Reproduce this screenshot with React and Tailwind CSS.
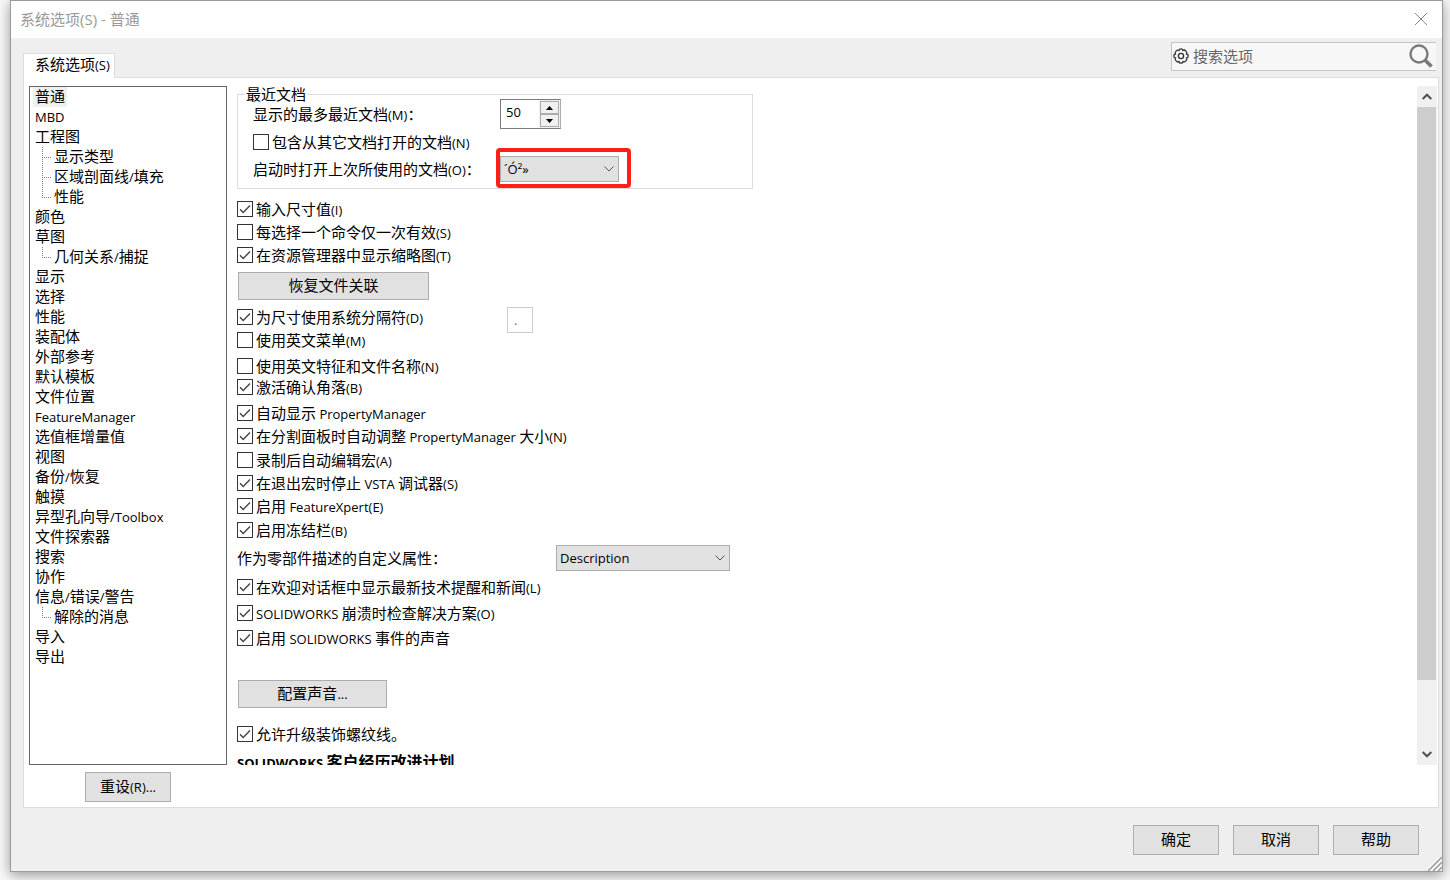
import React, { useState } from 'react';

const treeItems = [
  { label: '普通', selected: true },
  { label: 'MBD' },
  { label: '工程图' },
  { label: '显示类型', child: true },
  { label: '区域剖面线/填充', child: true },
  { label: '性能', child: true, last: true },
  { label: '颜色' },
  { label: '草图' },
  { label: '几何关系/捕捉', child: true, last: true },
  { label: '显示' },
  { label: '选择' },
  { label: '性能' },
  { label: '装配体' },
  { label: '外部参考' },
  { label: '默认模板' },
  { label: '文件位置' },
  { label: 'FeatureManager' },
  { label: '选值框增量值' },
  { label: '视图' },
  { label: '备份/恢复' },
  { label: '触摸' },
  { label: '异型孔向导/Toolbox' },
  { label: '文件探索器' },
  { label: '搜索' },
  { label: '协作' },
  { label: '信息/错误/警告' },
  { label: '解除的消息', child: true, last: true },
  { label: '导入' },
  { label: '导出' },
];

// Latin runs are set one step smaller than the Chinese around them
const Mixed = ({ children }) =>
  children.split(/([\x20-\x7e]+)/).map((part, i) =>
    i % 2 ? (
      <span key={i} className="text-[13px]">
        {part}
      </span>
    ) : (
      part
    )
  );

const Check = ({ label, checked = false, className = '' }) => {
  const [on, setOn] = useState(checked);
  return (
    <label className={`flex h-5 w-fit items-center gap-[3px] whitespace-nowrap ${className}`}>
      <span className="relative h-4 w-4 shrink-0">
        <input
          type="checkbox"
          checked={on}
          onChange={(e) => setOn(e.target.checked)}
          className="block h-4 w-4 appearance-none border border-[#333] bg-white"
        />
        {on && (
          <svg viewBox="0 0 16 16" className="pointer-events-none absolute inset-0 h-4 w-4" fill="none" stroke="#444" strokeWidth="1.4">
            <path d="M3 8.2 6.2 11.4 13 4.6" />
          </svg>
        )}
      </span>
      <span>
        <Mixed>{label}</Mixed>
      </span>
    </label>
  );
};

const Button = ({ children, className = '' }) => (
  <button type="button" className={`block border border-[#adadad] bg-[#e1e1e1] pb-0.5 text-center whitespace-nowrap ${className}`}>
    <Mixed>{children}</Mixed>
  </button>
);

const Select = ({ id, value, className = '' }) => (
  <span className={`relative block h-[26px] ${className}`}>
    <select id={id} defaultValue={value} className="h-full w-full appearance-none border border-[#adadad] bg-[#e1e1e1] pl-[3px] text-[13px]">
      <option>{value}</option>
    </select>
    <svg viewBox="0 0 10 6" className="pointer-events-none absolute top-[10px] right-[5px] h-1.5 w-2.5" fill="none" stroke="#555">
      <path d="M.5.5 5 5 9.5.5" />
    </svg>
  </span>
);

const TitleBar = () => (
  <header className="flex h-[37px] shrink-0 items-center justify-between bg-white pr-[15px] pb-0.5 pl-[9px]">
    <h1 className="text-[15px] text-[#999]">系统选项(S) - 普通</h1>
    <button type="button" aria-label="关闭">
      <svg viewBox="0 0 12 12" className="h-3 w-3" fill="none" stroke="#888">
        <path d="M0 0 12 12M12 0 0 12" />
      </svg>
    </button>
  </header>
);

const SearchBox = () => (
  <div className="mt-1 mr-1.5 flex h-[29px] w-[265px] items-center border border-r-0 border-[#c4c4c4] bg-[#f7f7f7] pb-0.5 pl-px">
    <svg viewBox="0 0 16 16" className="h-4 w-4 shrink-0" fill="none" stroke="#333" strokeWidth="1.3">
      <path d="M6 2.4Q6.2.8 8 .8T10 2.4Q11.4 1.4 12.9 3.1T13.6 6Q15.2 6.2 15.2 8T13.6 10Q14.4 11.4 12.9 12.9T10 13.6Q9.8 15.2 8 15.2T6 13.6Q4.6 14.6 3.1 12.9T2.4 10Q.8 9.8.8 8T2.4 6Q1.6 4.6 3.1 3.1T6 2.4Z" />
      <circle cx="8" cy="8" r="2.6" />
    </svg>
    <input
      type="text"
      aria-label="搜索选项"
      placeholder="搜索选项"
      className="min-w-0 flex-1 bg-transparent pl-1 text-[15px] outline-none placeholder:text-[#666]"
    />
    <button type="button" aria-label="搜索" className="mr-[3px]">
      <svg viewBox="0 0 24 24" className="h-6 w-6" fill="none" stroke="#7a7a7a">
        <circle cx="10" cy="10" r="8.5" strokeWidth="2.4" />
        <path d="m16 16 6.5 6.5" strokeWidth="3.8" />
      </svg>
    </button>
  </div>
);

const Tree = () => (
  <ul className="min-h-0 flex-1 overflow-hidden border border-[#646464] pl-[3px]">
    {treeItems.map((item, i) => (
      <li key={i} className="flex h-5">
        {item.child && (
          <svg viewBox="0 0 19 20" className="h-5 w-[19px] shrink-0" stroke="#808080" strokeDasharray="1 1" shapeRendering="crispEdges">
            <path d={item.last ? 'M9.5 0V11' : 'M9.5 0V20'} />
            <path d="M9 10.5H18" />
          </svg>
        )}
        <button type="button" className={`h-5 px-0.5 pb-0.5 leading-[18px] whitespace-nowrap ${item.selected ? 'bg-[#efefef]' : ''}`}>
          <Mixed>{item.label}</Mixed>
        </button>
      </li>
    ))}
  </ul>
);

const Spinner = () => (
  <span className="flex h-[30px] w-[61px] border border-[#7a7a7a] border-r-[#adadad] bg-white">
    <input id="recent" type="text" defaultValue="50" className="w-[38px] min-w-0 pb-1 pl-[5px] text-[13px] outline-none" />
    <span className="flex flex-1 flex-col bg-[#f0f0f0] p-px">
      <button type="button" aria-label="增加" className="flex flex-1 items-center justify-center border border-[#adadad]">
        <svg viewBox="0 0 7 4" className="h-1 w-[7px]">
          <path d="M0 4 3.5 0 7 4Z" />
        </svg>
      </button>
      <button type="button" aria-label="减少" className="flex flex-1 items-center justify-center border border-[#adadad]">
        <svg viewBox="0 0 7 4" className="h-1 w-[7px]">
          <path d="M0 0 3.5 4 7 0Z" />
        </svg>
      </button>
    </span>
  </span>
);

const RecentDocs = () => (
  <fieldset className="w-full max-w-[516px] border border-[#dcdcdc] pb-1.5 pl-[15px]">
    <legend className="-ml-2 px-px leading-4">最近文档</legend>
    <div className="-mt-[3px] flex items-center">
      <label htmlFor="recent" className="w-[247px]">
        <Mixed>显示的最多最近文档(M)：</Mixed>
      </label>
      <Spinner />
    </div>
    <Check label="包含从其它文档打开的文档(N)" className="mt-[3px]" />
    <div className="mt-1 flex items-center">
      <label htmlFor="startup" className="w-[247px]">
        <Mixed>启动时打开上次所使用的文档(O)：</Mixed>
      </label>
      <span className="relative">
        <Select id="startup" value="´Ó²»" className="w-[119px]" />
        <span className="pointer-events-none absolute -top-2 -right-3 -bottom-1.5 -left-1 rounded-[4px] border-4 border-[#ff1f14]" />
      </span>
    </div>
  </fieldset>
);

const GeneralOptions = () => (
  <form className="min-h-0 min-w-0 flex-1 overflow-hidden pl-2.5">
    <RecentDocs />
    <Check checked label="输入尺寸值(I)" className="mt-2.5" />
    <Check label="每选择一个命令仅一次有效(S)" className="mt-[3px]" />
    <Check checked label="在资源管理器中显示缩略图(T)" className="mt-[3px]" />
    <Button className="mt-[7px] ml-px h-7 w-[191px]">恢复文件关联</Button>
    <div className="mt-[7px] flex h-5 items-start">
      <Check checked label="为尺寸使用系统分隔符(D)" className="min-w-[270px]" />
      <input type="text" aria-label="分隔符" defaultValue="." disabled className="h-[26px] w-[26px] border border-[#ccc] pl-1.5 text-[13px] text-[#6d6d6d]" />
    </div>
    <Check label="使用英文菜单(M)" className="mt-[3px]" />
    <Check label="使用英文特征和文件名称(N)" className="mt-1.5" />
    <Check checked label="激活确认角落(B)" className="mt-px" />
    <Check checked label="自动显示 PropertyManager" className="mt-1.5" />
    <Check checked label="在分割面板时自动调整 PropertyManager 大小(N)" className="mt-[3px]" />
    <Check label="录制后自动编辑宏(A)" className="mt-1" />
    <Check checked label="在退出宏时停止 VSTA 调试器(S)" className="mt-[3px]" />
    <Check checked label="启用 FeatureXpert(E)" className="mt-[3px]" />
    <Check checked label="启用冻结栏(B)" className="mt-1" />
    <div className="mt-[5px] flex items-center">
      <label htmlFor="property" className="w-[319px]">
        作为零部件描述的自定义属性：
      </label>
      <Select id="property" value="Description" className="w-[174px]" />
    </div>
    <Check checked label="在欢迎对话框中显示最新技术提醒和新闻(L)" className="mt-1.5" />
    <Check checked label="SOLIDWORKS 崩溃时检查解决方案(O)" className="mt-1.5" />
    <Check checked label="启用 SOLIDWORKS 事件的声音" className="mt-[5px]" />
    <Button className="mt-8 ml-px h-7 w-[149px]">配置声音...</Button>
    <Check checked label="允许升级装饰螺纹线。" className="mt-4" />
    <h2 className="mt-2 text-base leading-5 font-bold">
      <Mixed>SOLIDWORKS 客户经历改进计划</Mixed>
    </h2>
  </form>
);

const ScrollBar = () => (
  <div className="mr-px flex w-5 flex-col bg-[#f0f0f0] pr-px">
    <button type="button" aria-label="向上滚动" className="flex h-[21px] items-center justify-center">
      <svg viewBox="0 0 10 7" className="h-[7px] w-2.5" fill="none" stroke="#505050" strokeWidth="2">
        <path d="M.7 6 5 1.7 9.3 6" />
      </svg>
    </button>
    <div className="min-h-0 flex-1">
      <div className="h-[90%] bg-[#cdcdcd]" />
    </div>
    <button type="button" aria-label="向下滚动" className="flex h-[21px] items-center justify-center">
      <svg viewBox="0 0 10 7" className="h-[7px] w-2.5" fill="none" stroke="#505050" strokeWidth="2">
        <path d="M.7 1 5 5.3 9.3 1" />
      </svg>
    </button>
  </div>
);

export default function App() {
  return (
    <div className="h-screen overflow-hidden bg-[#f8f8f8] pr-[7px] pb-2 pl-2.5 font-['Open_Sans','Noto_Sans_CJK_SC',sans-serif] text-[15px] leading-5 text-black">
      <div className="relative flex h-full flex-col border border-[#9b9b9b] bg-[#efefef] shadow-[0_3px_12px_rgba(0,0,0,0.4)]">
        <TitleBar />
        <div className="flex h-[39px] shrink-0 items-start justify-between">
          <div role="tablist" className="relative z-10 mt-[15px] ml-3">
            <button type="button" role="tab" aria-selected="true" className="h-[25px] border border-b-0 border-[#dcdcdc] bg-white pr-1 pb-1 pl-[11px] whitespace-nowrap">
              <Mixed>系统选项(S)</Mixed>
            </button>
          </div>
          <SearchBox />
        </div>
        <main className="mr-[3px] ml-3 flex min-h-0 flex-1 flex-col border border-[#dcdcdc] bg-white">
          <div className="mt-2 ml-[5px] flex min-h-0 flex-1">
            <nav className="flex w-[198px] shrink-0 flex-col">
              <Tree />
            </nav>
            <GeneralOptions />
            <ScrollBar />
          </div>
          <Button className="mt-[7px] mb-[5px] ml-[61px] h-[30px] w-[86px]">重设(R)...</Button>
        </main>
        <footer className="flex h-[63px] shrink-0 justify-end gap-3.5 pt-[17px] pr-[23px]">
          <Button className="h-[30px] w-[86px]">确定</Button>
          <Button className="h-[30px] w-[86px]">取消</Button>
          <Button className="h-[30px] w-[86px]">帮助</Button>
        </footer>
        <svg viewBox="0 0 14 14" className="absolute right-0 bottom-0 h-3.5 w-3.5" strokeWidth="1.5">
          <path stroke="#fff" d="M-1.5 14 14-1.5M3.5 14 14 3.5M8.5 14 14 8.5" />
          <path stroke="#999" d="M0 14 14 0M5 14 14 5M10 14 14 10" />
        </svg>
      </div>
    </div>
  );
}
